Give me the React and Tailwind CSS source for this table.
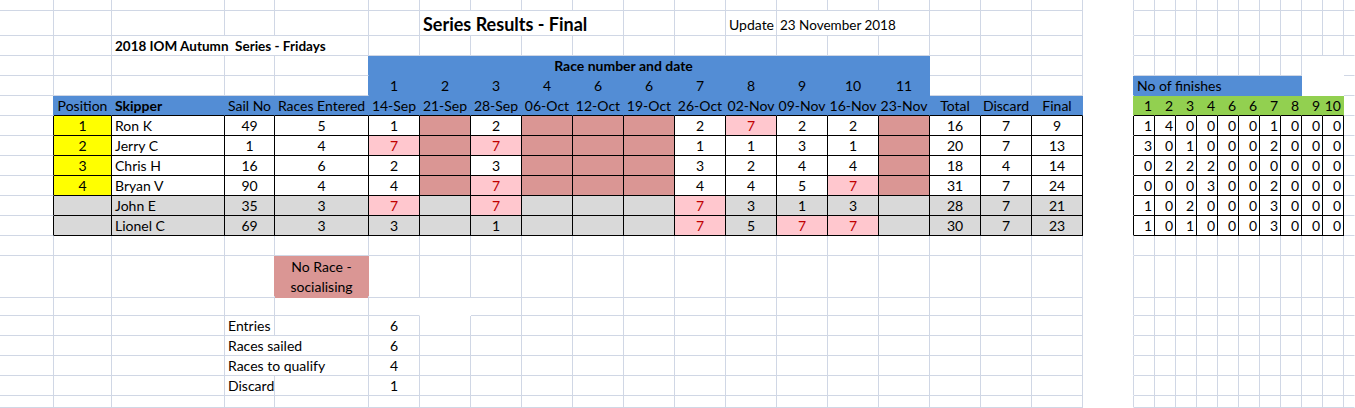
import React from 'react'

const COLS = 'grid-cols-[54px_58px_113px_50px_94px_repeat(15,51px)_repeat(10,21px)_11px]'

const SPAN = { 1: '', 2: 'col-span-2', 3: 'col-span-3', 4: 'col-span-4', 8: 'col-span-8', 11: 'col-span-11' }
const RIGHT = {
  g: 'border-r-[#D0D7E5]',
  k: 'border-r-black',
  n: 'border-r-transparent',
  blue: 'border-r-[#538DD5]',
  green: 'border-r-[#92D050]',
  rose: 'border-r-[#DA9694]',
}
const BOTTOM = { g: 'border-b-[#D0D7E5]', k: 'border-b-black', n: 'border-b-transparent' }
const ALIGN = { l: 'justify-start pl-[3px]', c: 'justify-center', r: 'justify-end pr-[2px]' }

const BLUE = 'bg-[#538DD5]'
const GREEN = 'bg-[#92D050]'
const GREY = 'bg-[#D9D9D9]'
const YELLOW = 'bg-[#FFFF00]'
const ROSE = 'bg-[#DA9694]'
const PINK = 'bg-[#FFC7CE] text-[#C00000]'

const dates = ['14-Sep', '21-Sep', '28-Sep', '06-Oct', '12-Oct', '19-Oct', '26-Oct', '02-Nov', '09-Nov', '16-Nov', '23-Nov']
const raceNumbers = ['1', '2', '3', '4', '6', '6', '7', '8', '9', '10', '11']
const finishHeads = ['1', '2', '3', '4', '6', '6', '7', '8', '9', '10']

// 'x' = no race (socialising), '!' = discarded / did not sail
const results = [
  { pos: '1', name: 'Ron K', sail: '49', entered: '5', races: ['1', 'x', '2', 'x', 'x', 'x', '2', '!7', '2', '2', 'x'], total: '16', discard: '7', final: '9', finishes: [1, 4, 0, 0, 0, 0, 1, 0, 0, 0] },
  { pos: '2', name: 'Jerry C', sail: '1', entered: '4', races: ['!7', 'x', '!7', 'x', 'x', 'x', '1', '1', '3', '1', 'x'], total: '20', discard: '7', final: '13', finishes: [3, 0, 1, 0, 0, 0, 2, 0, 0, 0] },
  { pos: '3', name: 'Chris H', sail: '16', entered: '6', races: ['2', 'x', '3', 'x', 'x', 'x', '3', '2', '4', '4', 'x'], total: '18', discard: '4', final: '14', finishes: [0, 2, 2, 2, 0, 0, 0, 0, 0, 0] },
  { pos: '4', name: 'Bryan V', sail: '90', entered: '4', races: ['4', 'x', '!7', 'x', 'x', 'x', '4', '4', '5', '!7', 'x'], total: '31', discard: '7', final: '24', finishes: [0, 0, 0, 3, 0, 0, 2, 0, 0, 0] },
  { pos: '', name: 'John E', sail: '35', entered: '3', races: ['!7', '', '!7', '', '', '', '!7', '3', '1', '3', ''], total: '28', discard: '7', final: '21', finishes: [1, 0, 2, 0, 0, 0, 3, 0, 0, 0] },
  { pos: '', name: 'Lionel C', sail: '69', entered: '3', races: ['3', '', '1', '', '', '', '!7', '5', '!7', '!7', ''], total: '30', discard: '7', final: '23', finishes: [1, 0, 1, 0, 0, 0, 3, 0, 0, 0] },
]

const blank = (n, props = {}) => Array.from({ length: n }, () => ({ ...props }))
const gap = { r: 'g', b: 'n' }
const edge = { r: 'n' }
const finishGrid = () => [...blank(10), edge]

function Cell({ span = 1, r = 'g', b = 'g', align = 'l', fill = '', className = '', text }) {
  return (
    <div className={`flex items-center whitespace-nowrap border-r border-b ${SPAN[span]} ${RIGHT[r]} ${BOTTOM[b]} ${ALIGN[align]} ${fill} ${className}`}>
      {text}
    </div>
  )
}

function Row({ height, cells }) {
  return (
    <div className={`grid ${COLS} ${height}`}>
      {cells.map((cell, index) => (
        <Cell key={index} {...cell} />
      ))}
    </div>
  )
}

function resultRow(row) {
  const qualified = row.pos !== ''
  const base = { r: 'k', b: 'k', align: 'c', fill: qualified ? '' : GREY }
  const raceCells = row.races.map((value) => {
    if (value === 'x') return { ...base, fill: ROSE }
    if (value.startsWith('!')) return { ...base, fill: PINK, text: value.slice(1) }
    return { ...base, text: value }
  })

  return [
    { r: 'k' },
    { ...base, fill: qualified ? YELLOW : GREY, text: row.pos },
    { ...base, align: 'l', text: row.name },
    { ...base, text: row.sail },
    { ...base, text: row.entered },
    ...raceCells,
    { ...base, text: row.total },
    { ...base, text: row.discard },
    { ...base, text: row.final },
    { r: 'k', b: 'n' },
    ...row.finishes.map((count) => ({ r: 'k', b: 'k', align: 'r', text: String(count) })),
    edge,
  ]
}

function App() {
  const rows = [
    { height: 'h-[11px]', cells: [...blank(19), gap, ...finishGrid()] },
    {
      height: 'h-[25px]',
      cells: [
        ...blank(6),
        { span: 4, text: 'Series Results - Final', className: 'text-[18px] font-bold pt-[2px]' },
        ...blank(2),
        { text: 'Update', className: 'pt-[3px]' },
        { span: 3, text: '23 November 2018', className: 'pt-[3px] text-[13.5px]' },
        ...blank(3),
        gap,
        ...finishGrid(),
      ],
    },
    {
      height: 'h-[20px]',
      cells: [...blank(2), { span: 3, text: '2018 IOM Autumn\u00a0 Series - Fridays', className: 'font-bold text-[13.5px]' }, ...blank(14), gap, ...finishGrid()],
    },
    {
      height: 'h-[20px]',
      cells: [
        ...blank(4),
        { r: 'blue' },
        { span: 11, r: 'n', b: 'n', fill: BLUE, align: 'c', className: 'pr-[51px] font-bold', text: 'Race number and date' },
        ...blank(3),
        gap,
        ...blank(8),
        { r: 'n', b: 'n' },
        { r: 'n', b: 'n' },
        edge,
      ],
    },
    {
      height: 'h-[20px]',
      cells: [
        ...blank(4),
        { r: 'blue' },
        ...raceNumbers.map((number) => ({ r: 'n', b: 'n', fill: BLUE, align: 'c', text: number })),
        ...blank(3),
        { r: 'blue', b: 'n' },
        { span: 8, r: 'n', b: 'n', fill: BLUE, text: 'No of finishes' },
        { r: 'n', b: 'n' },
        { r: 'n', b: 'n' },
        edge,
      ],
    },
    {
      height: 'h-[20px]',
      cells: [
        { r: 'blue' },
        { r: 'n', b: 'k', fill: BLUE, align: 'c', text: 'Position' },
        { r: 'n', b: 'k', fill: BLUE, text: 'Skipper', className: 'font-bold' },
        { r: 'n', b: 'k', fill: BLUE, align: 'c', text: 'Sail No' },
        { r: 'n', b: 'k', fill: BLUE, align: 'c', text: 'Races Entered' },
        ...dates.map((date) => ({ r: 'n', b: 'k', fill: BLUE, align: 'c', text: date })),
        { r: 'n', b: 'k', fill: BLUE, align: 'c', text: 'Total' },
        { r: 'n', b: 'k', fill: BLUE, align: 'c', text: 'Discard' },
        { r: 'n', b: 'k', fill: BLUE, align: 'c', text: 'Final' },
        { r: 'green', b: 'n' },
        ...finishHeads.map((head) => ({ r: 'n', b: 'k', fill: GREEN, align: 'r', text: head })),
        edge,
      ],
    },
    ...results.map((row) => ({ height: 'h-[20px]', cells: resultRow(row) })),
    { height: 'h-[20px]', cells: [...blank(19), gap, ...finishGrid()] },
    {
      height: 'h-[40px]',
      cells: [
        ...blank(3),
        { r: 'rose' },
        {
          r: 'n',
          b: 'n',
          fill: ROSE,
          align: 'c',
          className: 'flex-col leading-[20px] pt-[1px]',
          text: (
            <>
              <span>No Race -</span>
              <span>socialising</span>
            </>
          ),
        },
        ...blank(14),
        gap,
        ...finishGrid(),
      ],
    },
    {
      height: 'h-[20px]',
      cells: [...blank(5), { r: 'n' }, { r: 'n', b: 'n' }, ...blank(12), gap, ...finishGrid()],
    },
    {
      height: 'h-[20px]',
      cells: [...blank(3), { text: 'Entries' }, {}, { align: 'c', text: '6' }, ...blank(13), gap, ...finishGrid()],
    },
    {
      height: 'h-[20px]',
      cells: [...blank(3), { span: 2, text: 'Races sailed' }, { align: 'c', text: '6' }, ...blank(13), gap, ...finishGrid()],
    },
    {
      height: 'h-[20px]',
      cells: [...blank(3), { span: 2, text: 'Races to qualify' }, { align: 'c', text: '4' }, ...blank(13), gap, ...finishGrid()],
    },
    {
      height: 'h-[20px]',
      cells: [...blank(3), { text: 'Discard' }, {}, { align: 'c', text: '1' }, ...blank(13), gap, ...finishGrid()],
    },
    { height: 'h-[12px]', cells: [...blank(19), gap, ...finishGrid()] },
  ]

  return (
    <div className="h-[408px] w-[1355px] overflow-hidden bg-white font-[Lato,sans-serif] text-[14px] leading-[18px] text-black">
      {rows.map((row, index) => (
        <Row key={index} height={row.height} cells={row.cells} />
      ))}
    </div>
  )
}

export default App
